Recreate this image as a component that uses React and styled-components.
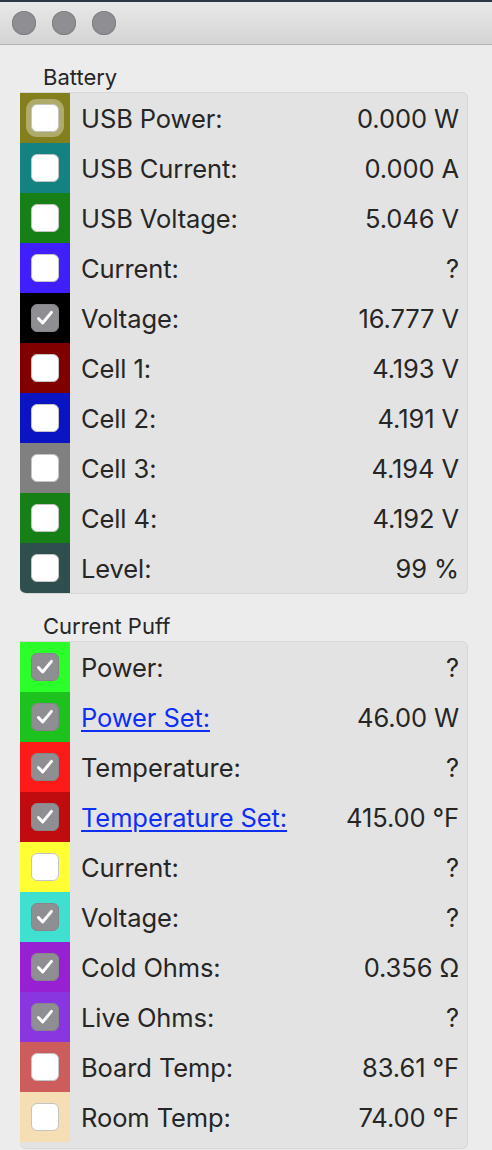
import React from "react";
import styled, { createGlobalStyle } from "styled-components";

const GlobalStyle = createGlobalStyle`
  html, body {
    margin: 0;
    padding: 0;
    background: #ececec;
    font-family: Inter, "Noto Sans", "Liberation Sans", sans-serif;
    color: #262626;
  }
`;

const Window = styled.div`
  width: 492px;
  height: 1150px;
  overflow: hidden;
  background: #ececec;
`;

const TitleBar = styled.div`
  height: 42px;
  border-top: 2px solid #2c3a48;
  border-bottom: 1px solid #b4b4b4;
  background: linear-gradient(#e9e9e9, #d4d4d4);
  display: flex;
  align-items: center;
  gap: 16px;
  padding-left: 12px;
`;

const Light = styled.span`
  width: 24px;
  height: 24px;
  border-radius: 50%;
  background: #8f8e93;
  box-shadow: inset 0 0 0 1px #7f7e83;
`;

const Content = styled.div`
  padding: 17px 24px 0 20px;
  display: flex;
  flex-direction: column;
`;

const GroupTitle = styled.div`
  font-size: 22px;
  padding-left: 23px;
  height: 30px;
  line-height: 30px;
`;

const Group = styled.div`
  background: #e3e3e3;
  border: 1px solid #d6d6d6;
  border-left: none;
  border-radius: 0 6px 6px 6px;
  overflow: hidden;
  margin-bottom: 17px;
  padding-bottom: ${(p) => p.$pad || 0}px;
`;

const Row = styled.div`
  display: flex;
  align-items: center;
  height: 50px;
`;

const Swatch = styled.div`
  width: 50px;
  height: 50px;
  background: ${(p) => p.$color};
  display: flex;
  align-items: center;
  justify-content: center;
  flex-shrink: 0;
`;

const Box = styled.div`
  width: 28px;
  height: 28px;
  border-radius: 6px;
  box-sizing: border-box;
  background: ${(p) => (p.$checked ? "#8e8e93" : "#ffffff")};
  border: 1px solid ${(p) => (p.$checked ? "#85858a" : "#c4c4c4")};
  display: flex;
  align-items: center;
  justify-content: center;
  box-shadow: ${(p) => (p.$focus ? "0 0 0 5px rgba(255,255,255,0.35)" : "none")};
`;

const Label = styled.span`
  flex: 1;
  padding-left: 11px;
  font-size: 25.5px;
  letter-spacing: -0.1px;
  color: #262626;
`;

const Link = styled.a`
  color: #0d2ff5;
  text-decoration: underline;
  text-underline-offset: 3px;
  text-decoration-thickness: 1.5px;
  cursor: pointer;
`;

const Value = styled.span`
  font-size: 25.5px;
  letter-spacing: -0.1px;
  padding-right: 8px;
  color: #262626;
`;

const Check = () => (
  <svg width="18" height="16" viewBox="0 0 17 15">
    <path
      d="M2.3 8 L6.3 12.2 L14.6 2.2"
      fill="none"
      stroke="#fff"
      strokeWidth="2.8"
      strokeLinecap="round"
      strokeLinejoin="round"
    />
  </svg>
);

const battery = [
  { label: "USB Power:", value: "0.000 W", color: "#847f1d", focus: true },
  { label: "USB Current:", value: "0.000 A", color: "#158282" },
  { label: "USB Voltage:", value: "5.046 V", color: "#167f16" },
  { label: "Current:", value: "?", color: "#3f1ffe" },
  { label: "Voltage:", value: "16.777 V", color: "#000000", checked: true },
  { label: "Cell 1:", value: "4.193 V", color: "#800000" },
  { label: "Cell 2:", value: "4.191 V", color: "#0a14c2" },
  { label: "Cell 3:", value: "4.194 V", color: "#808080" },
  { label: "Cell 4:", value: "4.192 V", color: "#168016" },
  { label: "Level:", value: "99 %", color: "#2f4f4f" },
];

const puff = [
  { label: "Power:", value: "?", color: "#2aff2a", checked: true },
  { label: "Power Set:", value: "46.00 W", color: "#1ec21e", checked: true, link: true },
  { label: "Temperature:", value: "?", color: "#ff1a1a", checked: true },
  { label: "Temperature Set:", value: "415.00 °F", color: "#c10c0f", checked: true, link: true },
  { label: "Current:", value: "?", color: "#ffff33" },
  { label: "Voltage:", value: "?", color: "#40e0d0", checked: true },
  { label: "Cold Ohms:", value: "0.356 Ω", color: "#9620d2", checked: true },
  { label: "Live Ohms:", value: "?", color: "#8a36e0", checked: true },
  { label: "Board Temp:", value: "83.61 °F", color: "#cd5c5c" },
  { label: "Room Temp:", value: "74.00 °F", color: "#f5deb3" },
];

const DataRow = ({ item }) => (
  <Row>
    <Swatch $color={item.color}>
      <Box $checked={item.checked} $focus={item.focus}>
        {item.checked && <Check />}
      </Box>
    </Swatch>
    <Label>{item.link ? <Link>{item.label}</Link> : item.label}</Label>
    <Value>{item.value}</Value>
  </Row>
);

export default function App() {
  return (
    <Window>
      <GlobalStyle />
      <TitleBar>
        <Light />
        <Light />
        <Light />
      </TitleBar>
      <Content>
        <GroupTitle>Battery</GroupTitle>
        <Group>
          {battery.map((item) => (
            <DataRow key={item.label} item={item} />
          ))}
        </Group>
        <GroupTitle>Current Puff</GroupTitle>
        <Group $pad={6}>
          {puff.map((item) => (
            <DataRow key={item.label} item={item} />
          ))}
        </Group>
      </Content>
    </Window>
  );
}
